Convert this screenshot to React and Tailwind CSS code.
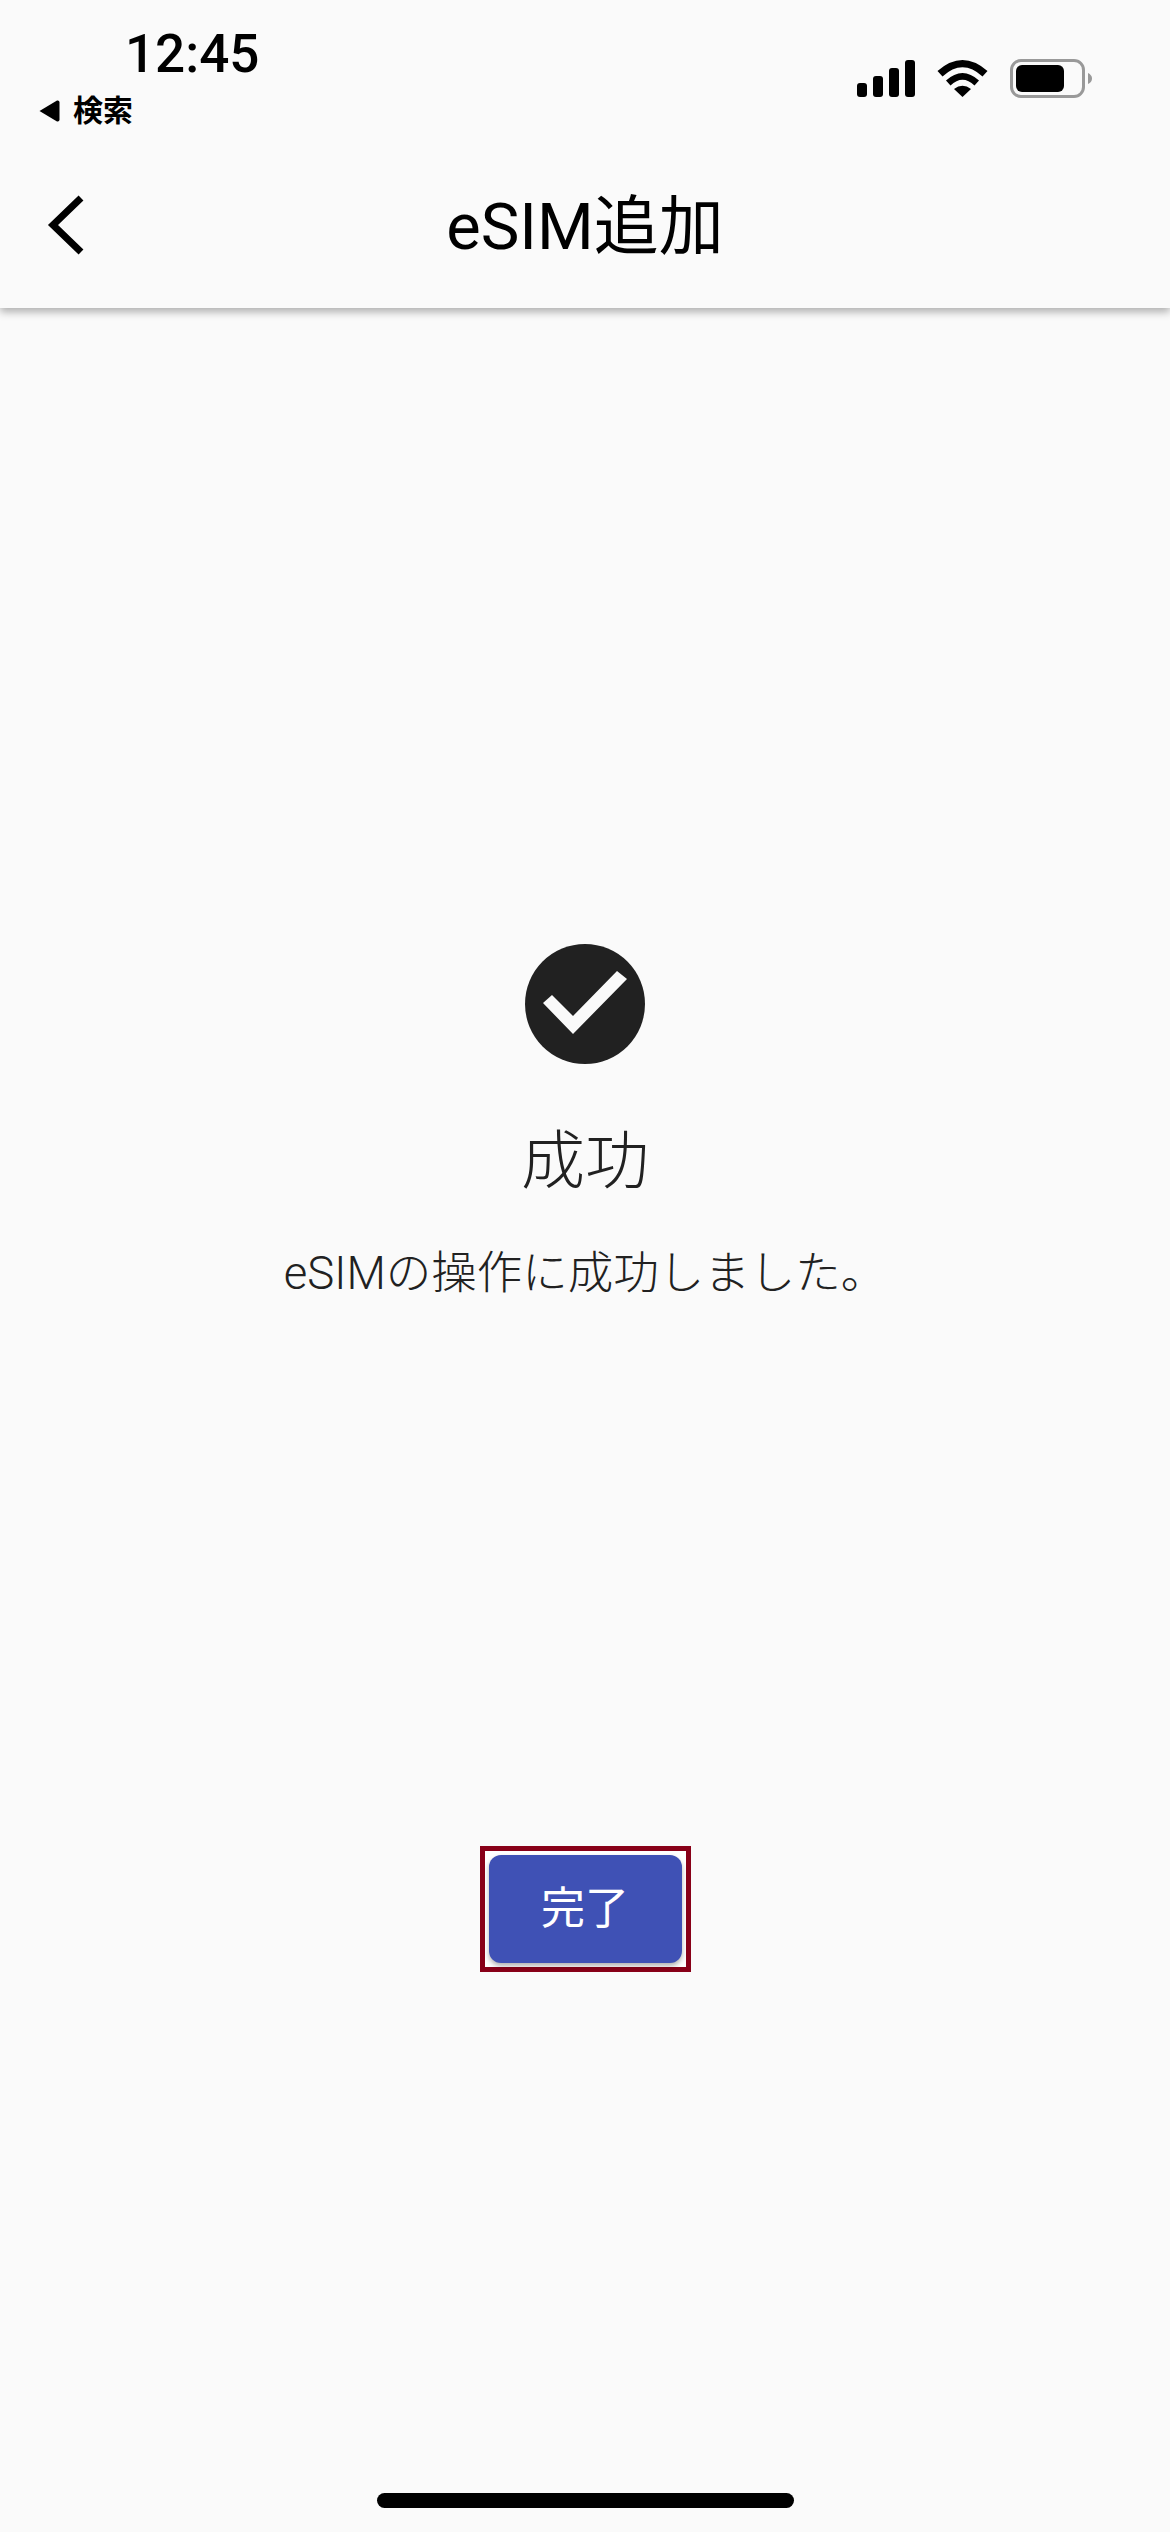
function Wifi() {
  return (
    <svg width="51" height="37" viewBox="0 0 51 37" fill="#000">
      <path d="M0.5 11 Q25.5 -11 50.5 11 L45.5 16.5 Q25.5 -2 5.5 16.5 Z" />
      <path d="M9 20.5 Q25.5 5.5 42 20.5 L37.5 25.5 Q25.5 14 13.5 25.5 Z" />
      <path d="M17 29 Q25.5 22.5 34 29 L25.5 37 Z" />
    </svg>
  );
}

function Battery() {
  return (
    <div className="flex items-center gap-[3px]">
      <div className="w-[75px] h-[39px] border-[3px] border-[#999999] rounded-[11px] p-[3px]">
        <div className="w-[48px] h-[27px] bg-black rounded-[6px]" />
      </div>
      <svg width="4" height="11" viewBox="0 0 4 11" fill="#999999">
        <path d="M0 0 Q4 2 4 5.5 Q4 9 0 11 Z" />
      </svg>
    </div>
  );
}

function Signal() {
  const bars = ["h-[14px]", "h-[21px]", "h-[29px]", "h-[37px]"];
  return (
    <div className="flex items-end gap-[6px]">
      {bars.map((h) => (
        <div key={h} className={`w-[10px] ${h} bg-black rounded-[3px]`} />
      ))}
    </div>
  );
}

export default function App() {
  return (
    <div className="w-[1170px] h-[2532px] bg-[#fafafa] flex flex-col font-['Roboto','Noto_Sans_CJK_JP',sans-serif] text-[#212121]">
      {/* Header */}
      <header className="h-[308px] shrink-0 flex flex-col bg-[#fafafa] shadow-[0_4px_8px_rgba(0,0,0,0.3)] text-black">
        <div className="h-[140px] flex justify-between">
          <div className="pt-[28px]">
            <p className="ml-[125px] text-[53px] leading-[52px] font-medium">12:45</p>
            <div className="mt-[11px] ml-[39px] flex items-center gap-[13px]">
              <svg width="21" height="22" viewBox="0 0 21 22" fill="#000">
                <path d="M0.5 11 L18 0.5 Q20.5 0 20.5 2.5 L20.5 19.5 Q20.5 22 18 21.5 Z" />
              </svg>
              <span className="text-[30px] leading-[40px] font-bold">検索</span>
            </div>
          </div>
          <div className="pt-[59px] pr-[78px] flex items-start gap-[22px]">
            <div className="flex items-center gap-[22px] pt-[1px]">
              <Signal />
              <Wifi />
            </div>
            <Battery />
          </div>
        </div>
        <div className="relative flex items-center justify-center h-[168px] pt-[6px]">
          <button className="absolute left-[44px] top-[53px]">
            <svg width="44" height="64" viewBox="0 0 44 64" fill="none" stroke="#000" strokeWidth="7">
              <path d="M37 5 L9 32 L37 59" />
            </svg>
          </button>
          <h1 className="text-[65px] leading-[76px] font-normal">eSIM追加</h1>
        </div>
      </header>

      {/* Content */}
      <main className="flex-1 flex flex-col items-center pt-[636px]">
        <div className="w-[120px] h-[120px] rounded-full bg-[#212121] flex items-center justify-center">
          <svg width="120" height="120" viewBox="0 0 120 120" fill="#fafafa">
            <polygon points="18,59 27,51 48,72 92,27 102,35 48,90" />
          </svg>
        </div>
        <h2 className="mt-[56px] text-[64px] leading-[84px] font-light">成功</h2>
        <p className="mt-[40px] text-[45.5px] leading-[60px] font-light">eSIMの操作に成功しました。</p>

        <div className="mt-[542px] border-[5px] border-[#880018] bg-white p-[4px]">
          <button className="w-[193px] h-[108px] rounded-[12px] bg-[#3f51b5] text-white text-[44px] font-normal shadow-[0_3px_5px_rgba(0,0,0,0.3)]">
            完了
          </button>
        </div>
      </main>

      {/* Home indicator */}
      <div className="flex justify-center pb-[24px]">
        <div className="w-[417px] h-[15px] rounded-full bg-black" />
      </div>
    </div>
  );
}
